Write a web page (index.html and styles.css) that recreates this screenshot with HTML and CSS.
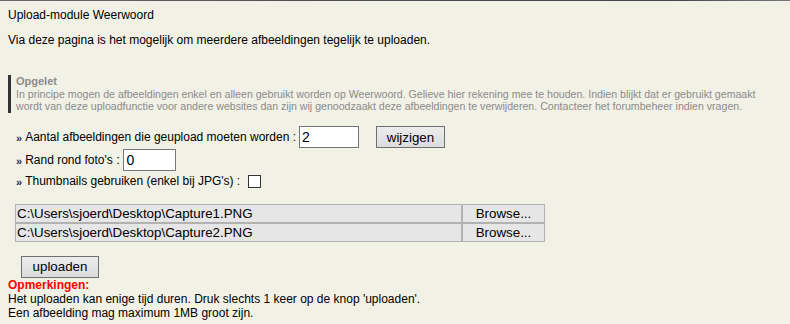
FILE: index.html
```html
<!DOCTYPE html>
<html lang="nl">
<head>
  <meta charset="UTF-8">
  <title>Upload-module Weerwoord</title>
  <link rel="stylesheet" href="styles.css">
</head>
<body>
  <div class="topline"></div>
  <div class="page">
    <div class="title">Upload-module Weerwoord</div>
    <p class="intro">Via deze pagina is het mogelijk om meerdere afbeeldingen tegelijk te uploaden.</p>

    <div class="notice">
      <b>Opgelet</b><br>
      In principe mogen de afbeeldingen enkel en alleen gebruikt worden op Weerwoord. Gelieve hier rekening mee te houden. Indien blijkt dat er gebruikt gemaakt wordt van deze uploadfunctie voor andere websites dan zijn wij genoodzaakt deze afbeeldingen te verwijderen. Contacteer het forumbeheer indien vragen.
    </div>

    <form class="options">
      <div class="row">
        <span class="bullet">»</span>
        <span class="label">Aantal afbeeldingen die geupload moeten worden :</span>
        <input class="field field-count" type="text" value="2">
        <button class="btn btn-change" type="button">wijzigen</button>
      </div>
      <div class="row">
        <span class="bullet">»</span>
        <span class="label">Rand rond foto's :</span>
        <input class="field field-border" type="text" value="0">
      </div>
      <div class="row row-check">
        <span class="bullet">»</span>
        <span class="label">Thumbnails gebruiken (enkel bij JPG's) :</span>
        <span class="check"></span>
      </div>
    </form>

    <div class="files">
      <div class="file">
        <span class="path">C:\Users\sjoerd\Desktop\Capture1.PNG</span>
        <span class="browse">Browse...</span>
      </div>
      <div class="file">
        <span class="path">C:\Users\sjoerd\Desktop\Capture2.PNG</span>
        <span class="browse">Browse...</span>
      </div>
    </div>

    <button class="btn btn-upload" type="button">uploaden</button>

    <div class="remarks">
      <b>Opmerkingen:</b><br>
      Het uploaden kan enige tijd duren. Druk slechts 1 keer op de knop 'uploaden'.<br>
      Een afbeelding mag maximum 1MB groot zijn.
    </div>
  </div>
</body>
</html>
```

FILE: styles.css
```css
body {
  margin: 0;
  background-color: #f2f1e6;
  font-family: "Liberation Sans", Arial, sans-serif;
  font-size: 12px;
  color: #000;
}

.topline {
  height: 1px;
  background: linear-gradient(to right, #6a6a6a, #4f4f4f 40%, #3f4652 85%, #777 100%);
}

.page {
  padding: 7px 8px 0;
}

.title {
  line-height: 14px;
}

.intro {
  margin: 11px 0 0;
  line-height: 14px;
}

.notice {
  margin-top: 28px;
  border-left: 3px solid #333;
  padding-left: 5px;
  font-size: 10.6px;
  line-height: 12.6px;
  color: #8b8b8b;
}

.notice b {
  font-size: 11px;
}

.options {
  margin: 13px 0 0;
  padding-left: 8px;
}

.row {
  display: flex;
  align-items: center;
  height: 23px;
}

.row-check {
  height: 19px;
}

.bullet {
  font-size: 11px;
  font-weight: bold;
  color: #1d2d5e;
  margin-right: 3px;
  padding-top: 2px;
}

.field {
  box-sizing: border-box;
  height: 22px;
  margin-left: 3px;
  padding: 0 2px;
  border: 1px solid #767676;
  background: #fff;
  font-family: "Liberation Sans", Arial, sans-serif;
  font-size: 14px;
}

.field-count {
  width: 60px;
}

.field-border {
  width: 53px;
  margin-left: 4px;
}

.check {
  box-sizing: border-box;
  width: 13px;
  height: 13px;
  margin-left: 8px;
  border: 1px solid #333;
  background: #fff;
}

.btn {
  box-sizing: border-box;
  height: 22px;
  padding: 0;
  border: 1px solid #707070;
  background: linear-gradient(#ececec, #dcdcdc);
  font-family: "Liberation Sans", Arial, sans-serif;
  font-size: 13.33px;
  color: #000;
}

.btn-change {
  width: 69px;
  margin-left: 17px;
}

.files {
  margin: 13px 0 0 7px;
  width: 530px;
}

.file {
  display: flex;
  height: 19px;
  font-size: 13.33px;
}

.path,
.browse {
  box-sizing: border-box;
  display: flex;
  align-items: center;
  background: #e6e6e6;
  border: 1px solid #b2b2b2;
}

.path {
  flex: 1;
  padding-left: 1px;
}

.browse {
  width: 83px;
  justify-content: center;
}

.btn-upload {
  display: block;
  width: 78px;
  margin: 14px 0 0 13px;
}

.remarks {
  line-height: 14px;
}

.remarks b {
  color: #f00;
}
```
